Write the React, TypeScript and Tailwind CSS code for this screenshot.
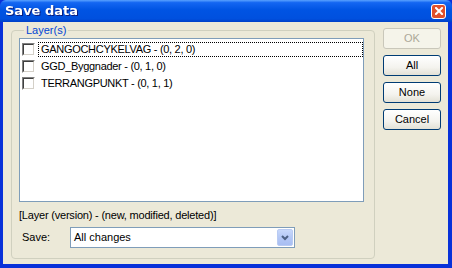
import React from "react";

const layers = [
    { name: "GANGOCHCYKELVAG", version: "(0, 2, 0)", focused: true },
    { name: "GGD_Byggnader", version: "(0, 1, 0)", focused: false },
    { name: "TERRANGPUNKT", version: "(0, 1, 1)", focused: false },
];

const font = "font-['Tahoma','Liberation_Sans',sans-serif]";

function XpButton({ label, disabled }: { label: string; disabled?: boolean }) {
    return (
        <button
            className={`w-[58px] h-[21px] rounded-[3px] border text-[11px] leading-none ${font} ${
                disabled
                    ? "border-[#C9C7BA] bg-[#F5F4EA] text-[#ACA899]"
                    : "border-[#003C74] bg-[linear-gradient(180deg,#FFFFFF_0%,#F4F3EE_60%,#E3E1D6_100%)] text-black"
            }`}
        >
            {label}
        </button>
    );
}

function CheckBox() {
    return (
        <span className="w-[13px] h-[13px] shrink-0 border-t border-l border-[#808080] border-r border-b border-r-white border-b-white">
            <span className="block w-full h-full border-t border-l border-[#404040] border-r border-b border-r-[#D4D0C8] border-b-[#D4D0C8] bg-white" />
        </span>
    );
}

export default function App() {
    return (
        <div className={`w-[452px] h-[268px] flex flex-col bg-[#0831D9] ${font}`}>
            {/* Title bar */}
            <div className="h-[22px] shrink-0 flex items-center justify-between pl-[5px] pr-[6px] rounded-t-[6px] bg-[linear-gradient(180deg,#5AA2FF_0%,#1466F2_12%,#0054E3_45%,#0050DE_85%,#0041C8_100%)]">
                <span className="text-white font-bold text-[13px] font-['Trebuchet_MS','DejaVu_Sans',sans-serif] drop-shadow-[1px_1px_0_#0A1E80]">
                    Save data
                </span>
                <span className="w-[15px] h-[15px] rounded-[3px] border border-white bg-[#E0502C] flex items-center justify-center">
                    <svg width="8" height="8" viewBox="0 0 8 8">
                        <path d="M1 1 L7 7 M7 1 L1 7" stroke="white" strokeWidth="2" strokeLinecap="square" />
                    </svg>
                </span>
            </div>

            {/* Body */}
            <div className="flex-1 flex mx-[3px] mr-[4px] mb-[4px] bg-[#ECE9D8] pt-[2px] pl-[8px] pr-[7px] pb-[5px] gap-[8px]">
                <fieldset className="w-[364px] rounded-[4px] border border-[#D0D0BF] pl-[7px] pr-[10px] pb-[7px] m-0 flex flex-col">
                    <legend className="ml-[5px] px-[2px] text-[11px] text-[#0046D5] leading-[13px]">Layer(s)</legend>

                    <div className="h-[164px] mt-[1px] border border-[#7F9DB9] bg-white pt-[2px] pl-[2px]">
                        {layers.map((layer, i) => (
                            <div key={i} className="h-[17px] flex items-center gap-[3px]">
                                <CheckBox />
                                <span
                                    className={`flex-1 h-[15px] flex items-center pl-[2px] text-[11px] tracking-[-0.3px] text-black ${
                                        layer.focused ? "border border-dotted border-black" : "border border-transparent"
                                    }`}
                                >
                                    {layer.name} - {layer.version}
                                </span>
                            </div>
                        ))}
                    </div>

                    <div className="mt-[7px] text-[11px] tracking-[-0.2px] text-black leading-[13px]">
                        [Layer (version) - (new, modified, deleted)]
                    </div>

                    <div className="mt-[5px] flex items-center">
                        <span className="w-[51px] pl-[3px] text-[11px] text-black">Save:</span>
                        <div className="w-[225px] h-[21px] border border-[#7F9DB9] bg-white flex items-center">
                            <span className="flex-1 pl-[3px] text-[11px] text-black">All changes</span>
                            <span className="w-[16px] h-[17px] mr-[1px] rounded-[2px] bg-[linear-gradient(180deg,#C8D8FB_0%,#B4C8F6_50%,#A8BEF2_100%)] border border-[#B9CBF3] flex items-center justify-center">
                                <svg width="8" height="6" viewBox="0 0 8 6">
                                    <path d="M1 1 L4 4 L7 1" stroke="#4D6185" strokeWidth="2" fill="none" />
                                </svg>
                            </span>
                        </div>
                    </div>
                </fieldset>

                <div className="flex flex-col gap-[6px] pt-[4px]">
                    <XpButton label="OK" disabled />
                    <XpButton label="All" />
                    <XpButton label="None" />
                    <XpButton label="Cancel" />
                </div>
            </div>
        </div>
    );
}
